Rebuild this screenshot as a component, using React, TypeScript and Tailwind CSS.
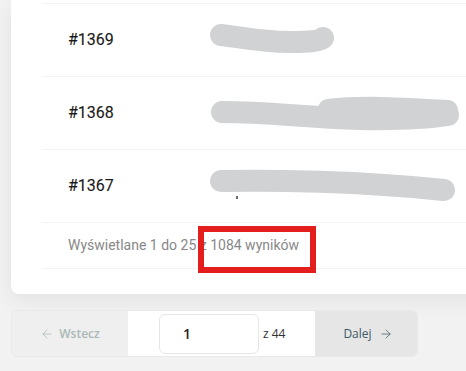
import { ArrowLeft, ArrowRight } from 'lucide-react'

const rows = [
  { id: '#1369', blob: 'a' },
  { id: '#1368', blob: 'b' },
  { id: '#1367', blob: 'c' },
]

function Blob({ kind }: { kind: string }) {
  if (kind === 'a') {
    return (
      <svg width="130" height="34" viewBox="0 0 130 34">
        <path d="M11 12 C30 14, 50 19, 80 19 C100 19, 110 18, 113 15" stroke="#d1d2d4" strokeWidth="22" strokeLinecap="round" fill="none" />
      </svg>
    )
  }
  if (kind === 'b') {
    return (
      <svg width="256" height="36" viewBox="0 0 256 36">
        <path d="M12 17 C60 17, 90 22, 150 24 C200 25, 225 22, 238 20" stroke="#d1d2d4" strokeWidth="22" strokeLinecap="round" fill="none" />
        <path d="M118 14 C150 10, 190 12, 238 15" stroke="#d1d2d4" strokeWidth="20" strokeLinecap="round" fill="none" />
      </svg>
    )
  }
  return (
    <svg width="246" height="34" viewBox="0 0 246 34">
      <path d="M11 12 C60 11, 150 12, 234 21" stroke="#d1d2d4" strokeWidth="22" strokeLinecap="round" fill="none" />
      <path d="M27 27 L27 30" stroke="#3a3a3a" strokeWidth="1.5" />
    </svg>
  )
}

export default function App() {
  return (
    <div className="relative h-[371px] w-[466px] overflow-hidden bg-[#f2f2f2] font-['Roboto',sans-serif]">
      <div className="ml-[11px] w-[520px] rounded-b-lg bg-white pt-[3px] pb-[25px] pl-[31px] shadow-[0_6px_22px_rgba(0,0,0,0.07)]">
        <div className="border-t border-[#f3f3f3]">
          {rows.map((r) => (
            <div key={r.id} className="flex h-[73px] items-center border-b border-[#f3f3f3] pl-[26px]">
              <span className="w-[142px] text-[16px] font-normal text-[#1a1a1a] [-webkit-text-stroke:0.12px_#1a1a1a]">{r.id}</span>
              <Blob kind={r.blob} />
            </div>
          ))}
          <div className="flex h-[46px] items-center border-b border-[#f3f3f3] pl-[26px] text-[14px] text-[#888]">
            Wyświetlane 1 do 25 z 1084 wyników
          </div>
        </div>
      </div>

      <div className="absolute left-[198px] top-[226px] h-[47px] w-[118px] border-[6px] border-[#e41d1d]" />

      <div className="mt-[16px] ml-[11px] flex h-[47px] w-[407px] overflow-hidden rounded-md border border-[#e9e9e9] font-['Open_Sans',sans-serif] text-[12px] font-medium">
        <div className="flex w-[116px] items-center justify-center gap-[5px] bg-[#efefef] text-[#a9b9b6]">
          <ArrowLeft size={14} strokeWidth={1.25} />
          <span className="font-semibold">Wstecz</span>
        </div>
        <div className="flex w-[187px] items-center bg-white pl-[31px]">
          <div className="flex h-[40px] w-[100px] items-center rounded-md border border-[#e6e6e6] pl-[23px] text-[14px] font-semibold text-[#222]">
            1
          </div>
          <span className="ml-[4px] text-[#333]">z 44</span>
        </div>
        <div className="flex flex-1 items-center justify-center gap-[7px] bg-[#e6e6e6] pl-[4px] text-[#3c5a65]">
          <span>Dalej</span>
          <ArrowRight size={14} strokeWidth={1.25} />
        </div>
      </div>
    </div>
  )
}
